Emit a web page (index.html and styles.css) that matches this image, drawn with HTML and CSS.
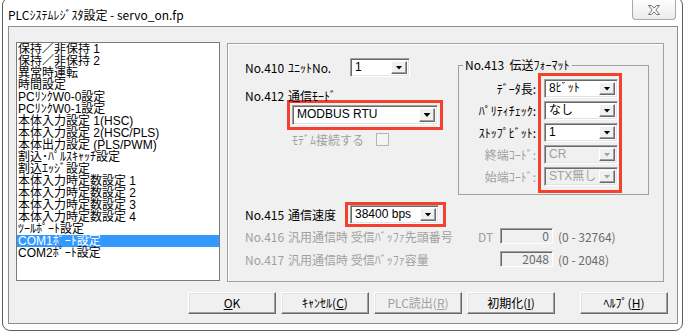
FILE: index.html
```html
<!DOCTYPE html>
<html lang="ja">
<head>
<meta charset="utf-8">
<title>PLCｼｽﾃﾑﾚｼﾞｽﾀ設定</title>
<link rel="stylesheet" href="styles.css">
</head>
<body>
<div class="win">
  <div class="titlebar">
    <span class="title">PLCｼｽﾃﾑﾚｼﾞｽﾀ設定 - servo_on.fp</span>
    <div class="close">
      <svg width="12" height="10" viewBox="0 0 12 10"><polygon points="0.5,0.5 3.5,0.5 6,3.2 8.5,0.5 11.5,0.5 7.8,5 11.5,9.5 8.5,9.5 6,6.8 3.5,9.5 0.5,9.5 4.2,5" fill="#fff" stroke="#707070" stroke-width="1"/></svg>
    </div>
  </div>
  <div class="client">
    <div class="main">
      <ul class="list">
        <li>保持／非保持 1</li>
        <li>保持／非保持 2</li>
        <li>異常時運転</li>
        <li>時間設定</li>
        <li>PCﾘﾝｸW0-0設定</li>
        <li>PCﾘﾝｸW0-1設定</li>
        <li>本体入力設定 1(HSC)</li>
        <li>本体入力設定 2(HSC/PLS)</li>
        <li>本体出力設定 (PLS/PWM)</li>
        <li>割込･ﾊﾟﾙｽｷｬｯﾁ設定</li>
        <li>割込ｴｯｼﾞ設定</li>
        <li>本体入力時定数設定 1</li>
        <li>本体入力時定数設定 2</li>
        <li>本体入力時定数設定 3</li>
        <li>本体入力時定数設定 4</li>
        <li>ﾂｰﾙﾎﾟｰﾄ設定</li>
        <li class="sel">COM1ﾎﾟｰﾄ設定</li>
        <li>COM2ﾎﾟｰﾄ設定</li>
      </ul>
      <div class="panel">
        <div class="top">
          <div class="leftcol">
            <div class="row r410">
              <span class="no">No.410</span><span class="lbl">ﾕﾆｯﾄNo.</span>
              <div class="combo w60"><span class="val">1</span><span class="arrow"></span></div>
            </div>
            <div class="row r412">
              <span class="no">No.412</span><span class="lbl">通信ﾓｰﾄﾞ</span>
            </div>
            <div class="hl hl-mode">
              <div class="combo w146 h20"><span class="val">MODBUS RTU</span><span class="arrow"></span></div>
            </div>
            <div class="row modem">
              <span class="dis modem-text">ﾓﾃﾞﾑ接続する</span><span class="chk"></span>
            </div>
          </div>
          <fieldset class="group">
            <legend>No.413&nbsp; 伝送ﾌｫｰﾏｯﾄ</legend>
            <div class="fmt">
              <div class="fmt-labels">
                <span>ﾃﾞｰﾀ長:</span>
                <span>ﾊﾟﾘﾃｨﾁｪｯｸ:</span>
                <span>ｽﾄｯﾌﾟﾋﾞｯﾄ:</span>
                <span class="dis">終端ｺｰﾄﾞ:</span>
                <span class="dis">始端ｺｰﾄﾞ:</span>
              </div>
              <div class="hl hl-fmt">
                <div class="combo w74"><span class="val">8ﾋﾞｯﾄ</span><span class="arrow"></span></div>
                <div class="combo w74"><span class="val">なし</span><span class="arrow"></span></div>
                <div class="combo w74"><span class="val">1</span><span class="arrow"></span></div>
                <div class="combo w74 disabled"><span class="val">CR</span><span class="arrow"></span></div>
                <div class="combo w74 disabled"><span class="val">STX無し</span><span class="arrow"></span></div>
              </div>
            </div>
          </fieldset>
        </div>
        <div class="row r415">
          <span class="no">No.415</span><span class="lbl415">通信速度</span>
          <div class="hl hl-speed">
            <div class="combo w89"><span class="val">38400 bps</span><span class="arrow"></span></div>
          </div>
        </div>
        <div class="row r416 dis">
          <span class="no">No.416</span><span class="lbl416">汎用通信時 受信ﾊﾞｯﾌｧ先頭番号</span>
          <span class="dt">DT</span>
          <span class="edit">0</span>
          <span class="range">(0 - 32764)</span>
        </div>
        <div class="row r417 dis">
          <span class="no">No.417</span><span class="lbl416">汎用通信時 受信ﾊﾞｯﾌｧ容量</span>
          <span class="dt"></span>
          <span class="edit">2048</span>
          <span class="range">(0 - 2048)</span>
        </div>
      </div>
    </div>
    <div class="buttons">
      <div class="btn"><u>O</u>K</div>
      <div class="btn">ｷｬﾝｾﾙ(<u>C</u>)</div>
      <div class="btn dis">PLC読出(<u>R</u>)</div>
      <div class="btn">初期化(<u>I</u>)</div>
      <div class="btn help">ﾍﾙﾌﾟ(<u>H</u>)</div>
    </div>
  </div>
</div>
</body>
</html>
```

FILE: styles.css
```css
* { box-sizing: border-box; }
html, body { margin: 0; padding: 0; background: #fff; }
body {
  font-family: "Noto Sans CJK JP", sans-serif;
  font-size: 12px;
  color: #000;
  overflow: hidden;
}

.win {
  margin: -3px 0 0 2px;
  width: 681px;
  height: 334px;
  border: 1px solid #5e5e5e;
  border-radius: 8px;
  background: #fff;
  display: flex;
  flex-direction: column;
}

.titlebar {
  height: 28px;
  display: flex;
  align-items: flex-start;
  flex: none;
}
.title {
  margin: 11px 0 0 5px;
  line-height: 12px;
  white-space: nowrap;
}
.close {
  margin: 0 6px 0 auto;
  width: 44px;
  height: 22px;
  border: 1px solid #a9a9a9;
  border-top: none;
  border-radius: 0 0 4px 4px;
  background: linear-gradient(#ffffff, #ececec);
  display: flex;
  align-items: center;
  justify-content: center;
  padding-top: 2px;
}

.client {
  margin: 0 4px 6px 5px;
  height: 298px;
  border: 1px solid #8e8e8e;
  background: #f0f0f0;
  padding: 15px 0 0 7px;
  flex: none;
}

.main { display: flex; align-items: flex-start; }

.list {
  width: 204px;
  height: 239px;
  margin: 0;
  padding: 0;
  list-style: none;
  border: 1px solid #7a7a7a;
  background: #fff;
  overflow: hidden;
  font-family: "Liberation Sans", "Noto Sans CJK JP", sans-serif;
  font-size: 12px;
}
.list li {
  height: 12px;
  line-height: 12px;
  padding-left: 1px;
  white-space: nowrap;
}
.list li.sel { background: #3399ff; color: #fff; }

.panel {
  margin: 1px 0 0 7px;
  width: 437px;
  height: 239px;
  border: 1px solid #a0a0a0;
  box-shadow: inset 1px 1px 0 #fff;
  padding-left: 17px;
}

.top { display: flex; align-items: flex-start; }
.leftcol { width: 213px; margin-top: 14px; }

.row { display: flex; align-items: center; white-space: nowrap; }
.no { width: 43px; flex: none; }
.lbl { width: 62px; flex: none; }
.r410 { height: 19px; }
.r412 { height: 12px; margin-top: 12px; }
.modem { height: 13px; margin: 3px 0 0 47px; }
.modem-text { width: 84px; }
.chk {
  width: 13px;
  height: 13px;
  border: 1px solid #b5b5b5;
  background: #f4f4f4;
}

.dis { color: #a0a0a0; }

.hl { border: 3px solid #f2412f; }
.hl-mode { margin: -1px 0 0 42px; width: 156px; padding: 2px; }
.hl-fmt { padding: 3px 1px 4px 3px; }
.hl-speed { padding: 0 4px 0 2px; }

.combo {
  height: 19px;
  border: 1px solid;
  border-color: #a0a0a0 #ffffff #ffffff #a0a0a0;
  box-shadow: inset 1px 1px 0 #696969, inset -1px -1px 0 #e3e3e3;
  background: #fff;
  display: flex;
  padding: 2px;
}
.hl-fmt .combo { margin-bottom: 3px; }
.hl-fmt .combo:last-child { margin-bottom: 0; }
.w60 { width: 60px; }
.w74 { width: 74px; }
.w89 { width: 89px; }
.w146 { width: 146px; }
.h20 { height: 20px; }
.val {
  flex: 1;
  padding-left: 2px;
  font-family: "Liberation Sans", "Noto Sans CJK JP", sans-serif;
  font-size: 12px;
  line-height: 13px;
  white-space: nowrap;
  overflow: hidden;
}
.arrow {
  width: 16px;
  flex: none;
  background: #f0f0f0;
  border: 1px solid;
  border-color: #ffffff #696969 #696969 #ffffff;
  box-shadow: inset -1px -1px 0 #a0a0a0;
  display: flex;
  align-items: center;
  justify-content: center;
}
.arrow::after {
  content: "";
  width: 7px;
  height: 4px;
  background: #000;
  clip-path: polygon(0 0, 100% 0, 50% 100%);
}
.combo.disabled { background: #f0f0f0; }
.combo.disabled .val { color: #a0a0a0; }
.combo.disabled .arrow::after { background: #a0a0a0; }

.group {
  margin: 15px 0 0 0;
  padding: 0 0 1px 0;
  width: 191px;
  border: 1px solid #a0a0a0;
  min-width: 0;
}
.group legend {
  margin-left: 4px;
  padding: 0 2px;
  line-height: 12px;
  font-size: 12px;
  white-space: nowrap;
}
.fmt { display: flex; align-items: flex-start; margin-top: 2px; }
.fmt-labels {
  width: 79px;
  padding: 6px 2px 0 0;
  display: flex;
  flex-direction: column;
  align-items: flex-end;
}
.fmt-labels span {
  height: 19px;
  line-height: 19px;
  margin-bottom: 3px;
  white-space: nowrap;
}

.r415 { height: 25px; margin-top: 7px; }
.lbl415 { width: 57px; flex: none; }
.r416 { height: 16px; margin-top: 1px; }
.r417 { height: 16px; margin-top: 7px; }
.lbl416 { width: 190px; flex: none; }
.dt { width: 22px; flex: none; }
.edit {
  width: 53px;
  height: 16px;
  border: 1px solid;
  border-color: #a0a0a0 #ffffff #ffffff #a0a0a0;
  box-shadow: inset 1px 1px 0 #696969;
  background: #f0f0f0;
  color: #6d6d6d;
  text-align: right;
  padding-right: 3px;
  line-height: 14px;
}
.range { margin-left: 5px; color: #6d6d6d; }

.buttons {
  display: flex;
  gap: 5px;
  margin: 10px 0 0 172px;
}
.btn {
  width: 88px;
  height: 22px;
  border: 1px solid;
  border-color: #ffffff #696969 #696969 #ffffff;
  box-shadow: inset -1px -1px 0 #a0a0a0, inset 1px 1px 0 #e3e3e3;
  background: #f0f0f0;
  display: flex;
  align-items: center;
  justify-content: center;
  white-space: nowrap;
  line-height: 12px;
}
.btn.help { margin-left: 20px; }
```
